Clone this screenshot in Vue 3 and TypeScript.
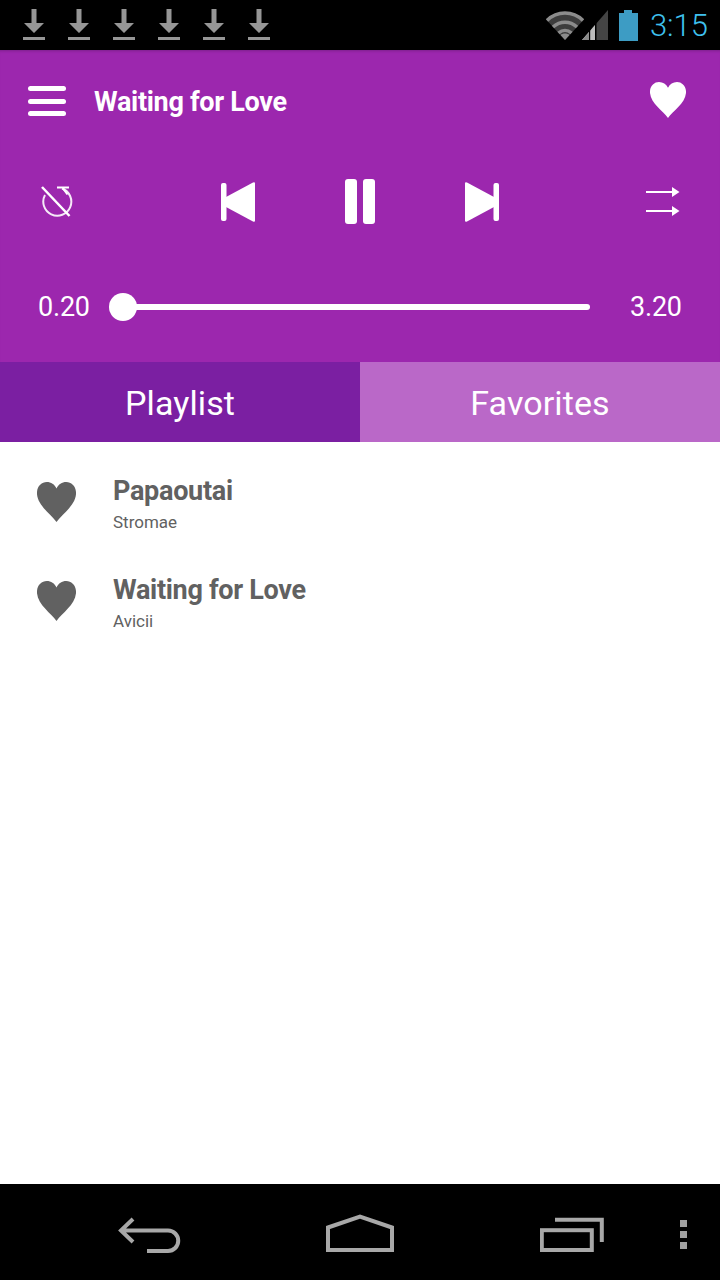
<script setup lang="ts">
const downloads: number[] = [1, 2, 3, 4, 5, 6]
const songs = [
  { title: 'Papaoutai', artist: 'Stromae' },
  { title: 'Waiting for Love', artist: 'Avicii' },
]
const heart = 'M20 36.500C15 30 3 23 2 13 1.500 6.500 6 2.500 11 2.500c4 0 7.200 2 9 5.500 1.800-3.500 5-5.500 9-5.500 5 0 9.500 4 9 10.500C37 23 25 30 20 36.500Z'
</script>

<template>
  <div class="screen">
    <div class="status">
      <div class="downloads">
        <svg v-for="d in downloads" :key="d" class="dl" width="24" height="34" viewBox="0 0 24 34">
          <path d="M9.500 1h5v14h7.500L12 25 2 15h7.500Z" fill="#969696" />
          <rect x="1" y="29" width="22" height="3" fill="#969696" />
        </svg>
      </div>
      <div class="sys">
        <svg class="wifi" width="38" height="32" viewBox="0 0 38 32">
          <path d="M1 11.500C11 1.500 27 1.500 37 11.500L19 31Z" fill="#3d3d3d" />
          <path d="M1 11.500C11 1.500 27 1.500 37 11.500M7 18C14 11.500 24 11.500 31 18M12.500 24C16.500 20.500 21.500 20.500 25.500 24" fill="none" stroke="#8c8c8c" stroke-width="3.500" />
          <path d="M14.500 26c2.500-2 6.500-2 9 0L19 31Z" fill="#8c8c8c" />
        </svg>
        <svg class="signal" width="28" height="32" viewBox="0 0 28 32">
          <path d="M27 1V31H1Z" fill="#444" />
          <path d="M14 16V31H1Z" fill="#bdbdbd" />
          <path d="M8 23.500V31H1Z" fill="#8a8a8a" />
          <rect x="8" y="20" width="1.200" height="11" fill="#000" />
          <rect x="14" y="14" width="1.500" height="18" fill="#000" />
        </svg>
        <svg class="battery" width="20" height="32" viewBox="0 0 20 32">
          <path d="M6 1h8v3h6v28H1V4h5Z" fill="#3d9cc4" />
        </svg>
        <span class="clock">3:15</span>
      </div>
    </div>

    <div class="player">
      <div class="top">
        <div class="burger"><i /><i /><i /></div>
        <span class="now">Waiting for Love</span>
        <svg class="top-heart" width="36" height="36" viewBox="2 2.500 36 34" preserveAspectRatio="none"><path :d="heart" fill="#fff" /></svg>
      </div>

      <div class="controls">
        <svg class="repeat" width="34" height="34" viewBox="0 0 34 34" fill="none" stroke="#fff" stroke-width="2">
          <path d="M23 4.500A14 14 0 1 1 6 11" stroke-opacity=".9" />
          <path d="M18 3.500h12M24 4.500l4.500 6" />
          <path d="M3 3l27.500 29" stroke-width="2.500" />
        </svg>
        <svg class="prev" width="36" height="42" viewBox="0 0 36 42">
          <rect x="1" y="2" width="5.500" height="38" rx="2" fill="#fff" />
          <path d="M6 16 33 1.500q2-1 2 1V39.500q0 2-2 1L6 26Z" fill="#fff" />
        </svg>
        <div class="pause"><i /><i /></div>
        <svg class="next" width="36" height="42" viewBox="0 0 36 42">
          <rect x="29.500" y="2" width="5.500" height="38" rx="2" fill="#fff" />
          <path d="M30 16 3 1.500q-2-1-2 1V39.500q0 2 2 1L30 26Z" fill="#fff" />
        </svg>
        <svg class="shuffle" width="34" height="32" viewBox="0 0 34 32" fill="#fff">
          <rect x="0" y="6" width="28" height="2" />
          <path d="M26 2l7.500 5-7.500 5Z" />
          <rect x="0" y="25" width="28" height="2" />
          <path d="M26 21l7.500 5-7.500 5Z" />
        </svg>
      </div>

      <div class="progress">
        <span class="time">0.20</span>
        <div class="track"><span class="thumb" /></div>
        <span class="time">3.20</span>
      </div>
    </div>

    <div class="tabs">
      <div class="tab active">Playlist</div>
      <div class="tab">Favorites</div>
    </div>

    <div class="list">
      <div v-for="s in songs" :key="s.title" class="row">
        <svg class="row-heart" width="39" height="40" viewBox="2 2.500 36 34" preserveAspectRatio="none"><path :d="heart" fill="#616161" /></svg>
        <div class="meta">
          <div class="title">{{ s.title }}</div>
          <div class="artist">{{ s.artist }}</div>
        </div>
      </div>
    </div>

    <div class="nav">
      <svg class="back" width="64" height="38" viewBox="0 0 64 38" fill="none" stroke="#a8a8a8" stroke-width="4">
        <path d="M15 3 3 14.500 15 26M3 14.500h47a10 10 0 0 1 0 20.500H29" />
      </svg>
      <svg class="home" width="68" height="38" viewBox="0 0 68 38" fill="none" stroke="#a8a8a8" stroke-width="4">
        <path d="M2 13.500 34 2.500l32 11V36H2Z" />
      </svg>
      <svg class="recent" width="64" height="38" viewBox="0 0 64 38" fill="none" stroke="#a8a8a8" stroke-width="4">
        <path d="M15 3.800h46.800V26" />
        <rect x="1.800" y="14.200" width="50" height="19.800" />
      </svg>
      <div class="dots"><i /><i /><i /></div>
    </div>
  </div>
</template>

<style scoped>
.screen {
  width: 720px;
  height: 1280px;
  display: flex;
  flex-direction: column;
  background: #fff;
  font-family: Roboto, "Liberation Sans", sans-serif;
  overflow: hidden;
}
.status {
  height: 50px;
  flex: none;
  background: #000;
  display: flex;
  justify-content: space-between;
  align-items: center;
  padding: 0 12px 0 22px;
  box-sizing: border-box;
}
.downloads { display: flex; gap: 21px; margin-top: -1px; }
.dl { display: block; }
.sys { display: flex; align-items: center; }
.signal { margin-left: -3px; }
.battery { margin-left: 9px; }
.clock {
  margin-left: 12px;
  color: #3fc0ee;
  font-size: 31px;
  font-weight: 300;
  line-height: 36px;
  padding-top: 2px;
}
.player {
  height: 312px;
  flex: none;
  background: #9c27ae;
  display: flex;
  flex-direction: column;
  box-shadow: inset 0 3px 3px -2px rgba(0, 0, 0, .2);
}
.top {
  height: 102px;
  flex: none;
  display: flex;
  align-items: center;
  padding: 0 34px 0 28px;
}
.burger { display: flex; flex-direction: column; gap: 7.500px; width: 38px; }
.burger i { display: block; height: 5px; border-radius: 3px; background: #fff; }
.now {
  margin-left: 28px;
  flex: 1;
  color: #fff;
  font-size: 27px;
  font-weight: 700;
  letter-spacing: -0.3px;
  padding-top: 2px;
}
.top-heart { flex: none; margin-top: -2px; }
.controls {
  height: 98px;
  flex: none;
  display: flex;
  align-items: center;
  padding-left: 39px;
}
.repeat { flex: none; }
.prev { flex: none; margin-left: 147px; margin-top: 1px; }
.pause { flex: none; margin-left: 89px; display: flex; gap: 6px; }
.pause i { display: block; width: 12px; height: 45px; border-radius: 3px; background: #fff; }
.next { flex: none; margin-left: 89px; margin-top: 1px; }
.shuffle { flex: none; margin-left: 146px; }
.progress {
  flex: none;
  display: flex;
  align-items: center;
  height: 42px;
  margin-top: 36px;
  padding-left: 38px;
}
.time { color: #fff; font-size: 27px; letter-spacing: -0.2px; width: 52px; flex: none; white-space: nowrap; }
.track {
  position: relative;
  flex: none;
  width: 480px;
  height: 6px;
  margin: 0 40px 0 20px;
  border-radius: 3px;
  background: #fff;
}
.thumb {
  position: absolute;
  left: -1px;
  top: -11px;
  width: 28px;
  height: 28px;
  border-radius: 50%;
  background: #fff;
}
.tabs { height: 80px; flex: none; display: flex; }
.tab {
  flex: 1;
  display: flex;
  align-items: center;
  justify-content: center;
  font-size: 34px;
  letter-spacing: 0.1px;
  color: #fff;
  background: #ba68c8;
  padding-top: 2px;
  box-sizing: border-box;
}
.tab.active { background: #7b1fa2; }
.list { flex: 1; padding-top: 14px; }
.row {
  height: 99px;
  display: flex;
  align-items: center;
  padding-left: 37px;
  box-sizing: border-box;
}
.row-heart { flex: none; margin-top: -7px; }
.meta { margin-left: 37px; color: #616161; }
.title { font-size: 27px; font-weight: 700; line-height: 34px; letter-spacing: -0.3px; margin-top: -1px; }
.artist { font-size: 17px; line-height: 27px; margin-top: 1px; }
.nav {
  height: 96px;
  flex: none;
  background: #000;
  display: flex;
  align-items: flex-start;
  padding-left: 118px;
  box-sizing: border-box;
}
.back { flex: none; margin-top: 32px; }
.home { flex: none; margin-left: 144px; margin-top: 30px; }
.recent { flex: none; margin-left: 146px; margin-top: 32px; }
.dots { flex: none; margin-left: 76px; margin-top: 36px; display: flex; flex-direction: column; gap: 4px; }
.dots i { display: block; width: 7px; height: 7px; background: #a0a0a0; }
</style>
